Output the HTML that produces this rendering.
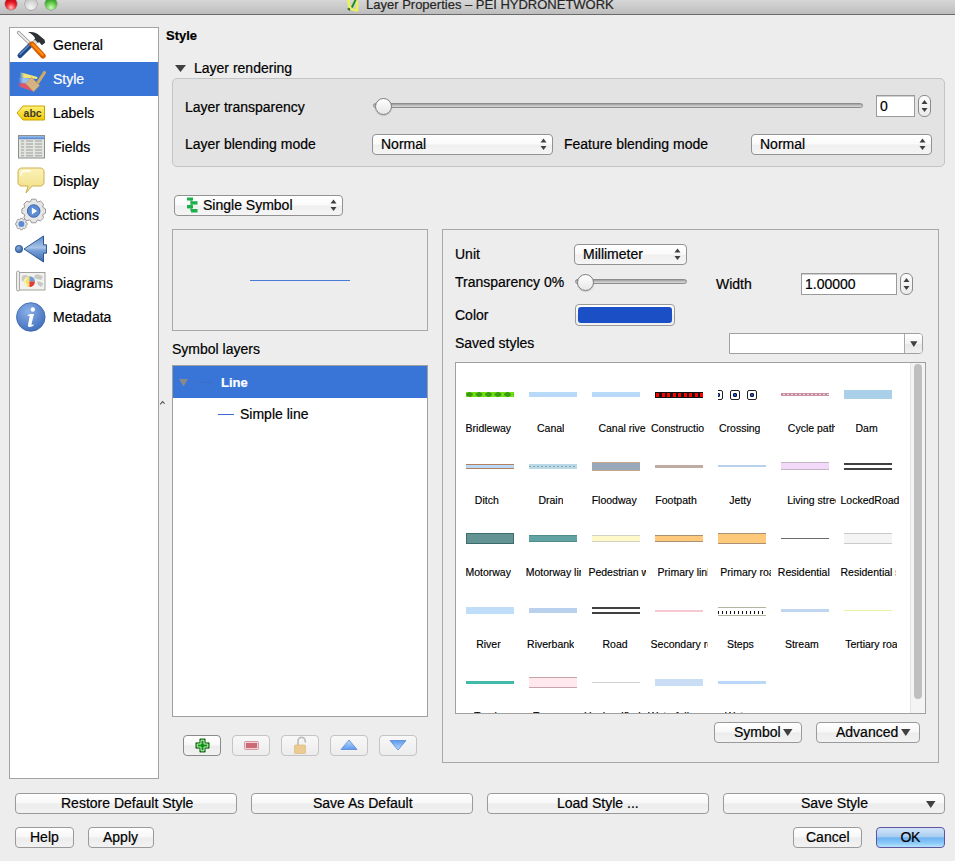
<!DOCTYPE html>
<html><head><meta charset="utf-8">
<style>
*{box-sizing:border-box;margin:0;padding:0}
html,body{width:955px;height:861px;overflow:hidden;background:#ededed;font-family:"Liberation Sans",sans-serif;font-size:14px;color:#000}
.a{position:absolute}
.t{position:absolute;white-space:nowrap;line-height:1;-webkit-text-stroke:0.2px currentColor}
#title{left:0;top:0;width:955px;height:15px;background:linear-gradient(#d6d6d6,#c8c8c8 60%,#bcbcbc);border-bottom:1px solid #6a6a6a}
.tl{position:absolute;top:-2.5px;width:12px;height:12px;border-radius:50%;box-shadow:0 0 0 .5px rgba(0,0,0,.35)}
.box{position:absolute;border:1px solid #9d9d9d;background:#fff}
.btn{position:absolute;border:1px solid #9a9a9a;border-radius:4px;background:linear-gradient(#ffffff 0%,#f7f7f7 48%,#ececec 52%,#f2f2f2 100%)}
.combo{position:absolute;border:1px solid #929292;border-radius:4px;background:linear-gradient(#ffffff 0%,#fafafa 48%,#efefef 52%,#f5f5f5 100%)}
.sb{position:absolute}
.lb{position:absolute;font-size:10.5px;white-space:nowrap;line-height:1;overflow:hidden;color:#000;-webkit-text-stroke:0.15px #000}
.sw{position:absolute}
</style></head><body>
<!-- title bar -->
<div id="title" class="a">
  <div class="tl" style="left:5px;background:radial-gradient(circle at 50% 80%,#ffc0c4 0%,#f02a30 40%,#c40010 75%,#8a0008 100%)"></div>
  <div class="tl" style="left:25px;background:radial-gradient(circle at 50% 80%,#f4f4f4 0%,#dcdcdc 45%,#c4c4c4 75%,#8e8e8e 100%)"></div>
  <div class="tl" style="left:45px;background:radial-gradient(circle at 50% 80%,#d0f8c0 0%,#6cd050 40%,#2e9a22 75%,#1a6410 100%)"></div>
  <svg class="a" style="left:347px;top:-2px" width="14" height="15" viewBox="0 0 14 15"><path d="M1.8 1.5C1.2 5 2 8.5 4.2 10.8" stroke="#eaf25a" stroke-width="2.6" fill="none" stroke-linecap="round"/><path d="M8.8 2C10.2 4.5 10.6 8 9.6 10.8" stroke="#eaf25a" stroke-width="2.4" fill="none" stroke-linecap="round"/><path d="M4.5 11C7 12.2 8.8 12.8 10.8 12.3" stroke="#eaf25a" stroke-width="2" fill="none" stroke-linecap="round"/><path d="M9 1L4.8 9.5" stroke="#138a1a" stroke-width="1.8"/><path d="M0 10.5L3.2 10.2L2.6 13Z" fill="#145a18"/></svg>
  <div class="t" style="left:366px;top:-2px;font-size:13px;color:#262626">Layer Properties – PEI HYDRONETWORK</div>
</div>

<!-- SIDEBAR -->
<div class="box" style="left:9px;top:27px;width:150px;height:752px;border-color:#a3a3a3"></div>
<div class="a" style="left:10px;top:62px;width:148px;height:34px;background:#3875d7"></div>
<!-- general icon -->
<svg class="a" style="left:14px;top:29px" width="34" height="32" viewBox="0 0 34 32">
  <path d="M4.5 3.5L16.5 15" stroke="#8c8c8c" stroke-width="3.2" stroke-linecap="round"/>
  <path d="M4.5 3.5L16.5 15" stroke="#ececec" stroke-width="1.8" stroke-linecap="round"/>
  <path d="M14 3.3C18.5 2.6 23 3.6 26 7L30.5 10.8L31.2 13.4L28 16.2L25.2 13.3L22.5 14.2L19.5 11.5L21.2 9.2C19.5 6.5 17.5 4.6 14 3.3Z" fill="#2e3236"/>
  <path d="M17 14.5L20.8 10.8L23.6 13.4L19.8 17.2Z" fill="#dfe3df" stroke="#9a9e9a" stroke-width=".5"/>
  <path d="M16.8 15.8L6 26.5" stroke="#1f4a8a" stroke-width="5" stroke-linecap="round"/>
  <path d="M15.6 15.8L6 25.2" stroke="#5c8ac8" stroke-width="1.4" stroke-linecap="round"/>
  <path d="M18 15L29 26.8" stroke="#d45e00" stroke-width="5.4" stroke-linecap="round"/>
  <path d="M18.6 15.2L28.6 25.8" stroke="#ff8c12" stroke-width="2.4" stroke-linecap="round"/>
</svg>
<!-- style icon -->
<svg class="a" style="left:15px;top:66px" width="34" height="28" viewBox="0 0 34 28">
  <defs><linearGradient id="fy" x1="0" x2="1"><stop offset="0" stop-color="#f0e870" stop-opacity="0"/><stop offset=".25" stop-color="#f0e478"/></linearGradient>
  <linearGradient id="fb" x1="0" x2="1"><stop offset="0" stop-color="#a8c8f0" stop-opacity="0"/><stop offset=".3" stop-color="#9cc0ec"/></linearGradient>
  <linearGradient id="fr" x1="0" x2="1"><stop offset="0" stop-color="#e85060" stop-opacity="0"/><stop offset=".25" stop-color="#e05868"/></linearGradient></defs>
  <path d="M4.5 6L22.5 11L22 13L4.5 11.5Z" fill="url(#fy)"/>
  <path d="M3.5 11.5L19 13L12 18L3.5 16.3Z" fill="url(#fb)"/>
  <path d="M2.5 16.3L12 18L18.5 25.6L2.5 20Z" fill="url(#fr)"/>
  <path d="M23 16.5L29.5 6.5" stroke="#d0a868" stroke-width="3.2" stroke-linecap="round"/>
  <path d="M10.8 17.6L16.5 11.5L24.6 19.4L18.6 25.8Z" fill="#d8b888" stroke="#b89058" stroke-width=".7"/>
  <path d="M13 15.3L21 23.3M15 13.3L23 21.3M12.5 19.5L19 13M15 22L21.5 15.5" stroke="#c4a070" stroke-width=".5"/>
</svg>
<!-- labels icon -->
<svg class="a" style="left:16px;top:105px" width="30" height="16" viewBox="0 0 30 16">
  <defs><linearGradient id="gy" x1="0" y1="0" x2="0" y2="1"><stop offset="0" stop-color="#fff27a"/><stop offset="1" stop-color="#f2c800"/></linearGradient></defs>
  <path d="M1 8L7 1H28.5V15H7Z" fill="url(#gy)" stroke="#c9a400" stroke-width="1"/>
  <text x="7.6" y="11.8" font-family="Liberation Sans" font-weight="bold" font-size="10.5" fill="#403c28">abc</text>
</svg>
<!-- fields icon -->
<svg class="a" style="left:18px;top:135px" width="27" height="24" viewBox="0 0 27 24">
  <defs><linearGradient id="gh" x1="0" y1="0" x2="0" y2="1"><stop offset="0" stop-color="#9cc0ee"/><stop offset="1" stop-color="#4f82cc"/></linearGradient></defs>
  <rect x=".5" y=".5" width="26" height="22.5" fill="#e2e4e0" stroke="#8e908c"/>
  <rect x="1" y="1" width="25" height="3.2" fill="url(#gh)"/>
  <g stroke="#9c9e9a" stroke-width="1">
   <path d="M3 6H6M8 6H15M17 6H24M3 9H6M8 9H15M17 9H24M3 12H6M8 12H15M17 12H24M3 15H6M8 15H15M17 15H24M3 18H6M8 18H15M17 18H24M3 20.8H6M8 20.8H15M17 20.8H24"/>
  </g>
</svg>
<!-- display icon -->
<svg class="a" style="left:17px;top:167px" width="28" height="27" viewBox="0 0 28 27">
  <defs><linearGradient id="gb" x1="0" y1="0" x2="0" y2="1"><stop offset="0" stop-color="#fbf2b8"/><stop offset="1" stop-color="#f0dc80"/></linearGradient></defs>
  <path d="M5 1H23C25.5 1 27 2.5 27 5V15C27 17.5 25.5 19 23 19H15L9 26L11 19H5C2.5 19 1 17.5 1 15V5C1 2.5 2.5 1 5 1Z" fill="url(#gb)" stroke="#cdb050" stroke-width="1"/>
  <path d="M4 8C4 5 5 4 8 4H13" stroke="#fff" stroke-width="1.5" fill="none" stroke-linecap="round"/>
</svg>
<!-- actions icon -->
<svg class="a" style="left:14px;top:197px" width="34" height="36" viewBox="0 0 34 36">
  <path d="M28.83 10.43 L31.51 11.89 L31.51 16.11 L28.83 17.57 L28.68 17.93 L29.54 20.86 L26.56 23.84 L23.63 22.98 L23.27 23.13 L21.81 25.81 L17.59 25.81 L16.13 23.13 L15.77 22.98 L12.84 23.84 L9.86 20.86 L10.72 17.93 L10.57 17.57 L7.89 16.11 L7.89 11.89 L10.57 10.43 L10.72 10.07 L9.86 7.14 L12.84 4.16 L15.77 5.02 L16.13 4.87 L17.59 2.19 L21.81 2.19 L23.27 4.87 L23.63 5.02 L26.56 4.16 L29.54 7.14 L28.68 10.07Z" fill="#e6e6e6" stroke="#8e8e8e" stroke-width=".9"/>
  <path d="M11.68 25.32 L13.11 25.98 L13.11 28.02 L11.68 28.68 L11.61 28.84 L12.16 30.32 L10.72 31.76 L9.24 31.21 L9.08 31.28 L8.42 32.71 L6.38 32.71 L5.72 31.28 L5.56 31.21 L4.08 31.76 L2.64 30.32 L3.19 28.84 L3.12 28.68 L1.69 28.02 L1.69 25.98 L3.12 25.32 L3.19 25.16 L2.64 23.68 L4.08 22.24 L5.56 22.79 L5.72 22.72 L6.38 21.29 L8.42 21.29 L9.08 22.72 L9.24 22.79 L10.72 22.24 L12.16 23.68 L11.61 25.16Z" fill="#e6e6e6" stroke="#8e8e8e" stroke-width=".8"/>
  <circle cx="19.7" cy="14" r="6.3" fill="#5b8bd2" stroke="#3a62a6" stroke-width=".9"/>
  <path d="M17.8 10.6L23.2 14L17.8 17.4Z" fill="#fff"/>
  <circle cx="7.4" cy="27" r="3" fill="#5b8bd2"/>
</svg>
<!-- joins icon -->
<svg class="a" style="left:14px;top:235px" width="34" height="28" viewBox="0 0 34 28">
  <defs><linearGradient id="ga" x1="0" y1="0" x2="0" y2="1"><stop offset="0" stop-color="#5a88c8"/><stop offset=".45" stop-color="#a8c4e8"/><stop offset=".55" stop-color="#7aa0d8"/><stop offset="1" stop-color="#3a68b0"/></linearGradient>
  <radialGradient id="gdot" cx=".4" cy=".35" r=".7"><stop offset="0" stop-color="#8ab0e0"/><stop offset="1" stop-color="#2a5a9a"/></radialGradient></defs>
  <circle cx="5" cy="14" r="3.7" fill="url(#gdot)" stroke="#24508a" stroke-width=".7"/>
  <path d="M10 14L29.5 1V9.8H32.5V18.2H29.5V27Z" fill="url(#ga)" stroke="#1e4a88" stroke-width=".9" stroke-linejoin="round"/>
</svg>
<!-- diagrams icon -->
<svg class="a" style="left:15px;top:270px" width="33" height="22" viewBox="0 0 33 22">
  <rect x="3.5" y="2.5" width="26.5" height="17.5" fill="#f2f2f0" stroke="#8c8c88" stroke-width=".8"/>
  <path d="M7 6C9 4.5 12 5 14 6.5L13 9L9 9.5L8 12L6.5 10Z M20 5C23 4 27 5 28 7L26 10L22 9L19 8Z M22 12C24 11 27 12 28.5 14L26 17L23 15Z" fill="#c8cac6"/>
  <rect x="1.5" y="1" width="3" height="20" rx="1.5" fill="#ececea" stroke="#8c8c88" stroke-width=".7"/>
  <circle cx="14.5" cy="11.6" r="5.4" fill="#f4e070"/>
  <path d="M14.5 11.6V6.2A5.4 5.4 0 0 1 19.9 11.6Z" fill="#6a98d8"/>
  <path d="M14.5 11.6H19.9A5.4 5.4 0 0 1 14.5 17Z" fill="#e03a3a"/>
  <path d="M12 7.5A5 5 0 0 0 12 15.5" stroke="#fff8c8" stroke-width="1.2" fill="none"/>
</svg>
<!-- metadata icon -->
<svg class="a" style="left:16px;top:302px" width="30" height="30" viewBox="0 0 30 30">
  <defs><radialGradient id="gm" cx=".4" cy=".3" r=".8"><stop offset="0" stop-color="#8ab0e8"/><stop offset="1" stop-color="#3a68b8"/></radialGradient></defs>
  <circle cx="14.8" cy="15" r="14.3" fill="url(#gm)" stroke="#3a64a8" stroke-width=".8"/>
  <circle cx="16.8" cy="7.5" r="2.2" fill="#fff"/>
  <path d="M14 12H18L15.5 22C15.3 23 16 23.2 17.5 22.3L17.8 23.3C15 25.5 11.5 25.8 12 23L13.6 14.5C13.7 13.7 13 13.5 11.8 14L11.6 13Z" fill="#fff"/>
</svg>
<div class="t" style="left:53px;top:38px">General</div>
<div class="t" style="left:53px;top:72px;color:#fff">Style</div>
<div class="t" style="left:53px;top:106px">Labels</div>
<div class="t" style="left:53px;top:140px">Fields</div>
<div class="t" style="left:53px;top:174px">Display</div>
<div class="t" style="left:53px;top:208px">Actions</div>
<div class="t" style="left:53px;top:242px">Joins</div>
<div class="t" style="left:53px;top:276px">Diagrams</div>
<div class="t" style="left:53px;top:310px">Metadata</div>
<svg class="a" style="left:159px;top:400px" width="8" height="6"><path d="M1.2 4.3L3.6 1.6L5.6 3.6" stroke="#555" stroke-width="1.1" fill="none"/></svg>

<!-- heading -->
<div class="t" style="left:166px;top:29px;font-weight:bold;font-size:13px">Style</div>
<svg class="a" style="left:174.5px;top:65px" width="11" height="7"><path d="M0 0H11L5.5 7Z" fill="#404040"/></svg>
<div class="t" style="left:194px;top:61px">Layer rendering</div>

<!-- GROUP -->
<div class="a" style="left:172px;top:78px;width:773px;height:89px;border:1px solid #c4c4c4;border-radius:5px;background:#e3e3e3"></div>
<div class="t" style="left:185px;top:100px">Layer transparency</div>
<div class="t" style="left:185px;top:137px">Layer blending mode</div>
<div class="t" style="left:564px;top:137px">Feature blending mode</div>
<!-- slider -->
<div class="a" style="left:373px;top:103px;width:490px;height:5px;border-radius:3px;background:linear-gradient(#9c9c9c,#c8c8c8 60%,#d8d8d8);border:1px solid #8c8c8c"></div>
<div class="a" style="left:375px;top:98px;width:17px;height:17px;border-radius:50%;background:linear-gradient(#ffffff,#e6e6e6);border:1px solid #7e7e7e;box-shadow:0 1px 1px rgba(0,0,0,.15)"></div>
<!-- spinbox -->
<div class="a" style="left:876px;top:95px;width:39px;height:22px;background:#fff;border:1px solid #9a9a9a;box-shadow:inset 0 1px 0 #d0d0d0"></div>
<div class="t" style="left:880px;top:99px">0</div>
<div class="a" style="left:918px;top:95px;width:13px;height:22px;border:1px solid #8a8a8a;border-radius:6px;background:linear-gradient(#fdfdfd,#eaeaea)"></div>
<svg class="a" style="left:921px;top:99px" width="7" height="14"><path d="M3.5 1L6.5 5H.5Z M.5 9H6.5L3.5 13Z" fill="#404040"/></svg>
<!-- combos -->
<div class="combo" style="left:372px;top:134px;width:181px;height:21px"></div>
<div class="t" style="left:381px;top:137px">Normal</div>
<svg class="a" style="left:540px;top:138px" width="7" height="13"><path d="M3.5 0.5L6.5 4.5H.5Z M.5 8H6.5L3.5 12Z" fill="#404040"/></svg>
<div class="combo" style="left:751px;top:134px;width:181px;height:21px"></div>
<div class="t" style="left:760px;top:137px">Normal</div>
<svg class="a" style="left:919px;top:138px" width="7" height="13"><path d="M3.5 0.5L6.5 4.5H.5Z M.5 8H6.5L3.5 12Z" fill="#404040"/></svg>

<!-- SYMBOL LEFT -->
<div class="combo" style="left:174px;top:195px;width:169px;height:21px"></div>
<svg class="a" style="left:187px;top:197px" width="11" height="16" viewBox="0 0 11 16">
  <path d="M4 1V14" stroke="#1a8a3a" stroke-width="1"/>
  <rect x="0" y="0.5" width="6" height="3" fill="#19b24a"/><rect x="4" y="4.2" width="6.5" height="3.4" fill="#19b24a"/>
  <rect x="0" y="8" width="6" height="3.4" fill="#19b24a"/><rect x="4" y="12" width="6.5" height="3.5" fill="#19b24a"/>
</svg>
<div class="t" style="left:203px;top:198px">Single Symbol</div>
<svg class="a" style="left:330px;top:199px" width="7" height="13"><path d="M3.5 0.5L6.5 4.5H.5Z M.5 8H6.5L3.5 12Z" fill="#404040"/></svg>
<!-- preview -->
<div class="a" style="left:172px;top:229px;width:256px;height:102px;border:1px solid #a8a8a8;background:#ededed"></div>
<div class="a" style="left:250px;top:280px;width:100px;height:1px;background:#4a7ad8"></div>
<div class="t" style="left:172px;top:342px">Symbol layers</div>
<!-- tree -->
<div class="box" style="left:172px;top:365px;width:256px;height:352px;border-color:#a0a0a0"></div>
<div class="a" style="left:173px;top:366px;width:254px;height:32px;background:#3875d7"></div>
<svg class="a" style="left:179px;top:379px" width="10" height="8"><path d="M0 0H9L4.5 7.5Z" fill="#8a8a8a"/></svg>
<div class="a" style="left:198px;top:382px;width:15px;height:1px;background:#3a6ec8"></div>
<div class="t" style="left:221px;top:376px;font-weight:bold;font-size:13px;color:#fff">Line</div>
<div class="a" style="left:218px;top:414px;width:16px;height:1px;background:#3a6ad0"></div>
<div class="t" style="left:240px;top:407px">Simple line</div>
<!-- tool buttons -->
<div class="btn" style="left:183px;top:735px;width:38px;height:21px;border-color:#8a8a8a"></div>
<svg class="a" style="left:194.5px;top:737.5px" width="15" height="15" viewBox="0 0 17 17"><path d="M5.5 1H11.5V5.5H16V11.5H11.5V16H5.5V11.5H1V5.5H5.5Z" fill="#0a7a0a" stroke="#005a00" stroke-width=".8"/><path d="M6.8 2.5H10.2V6.8H14.5V10.2H10.2V14.5H6.8V10.2H2.5V6.8H6.8Z" fill="#0c960c" stroke="#e8f8e8" stroke-width="1"/></svg>
<div class="btn" style="left:232px;top:735px;width:38px;height:21px;border-color:#c4c4c4;background:linear-gradient(#f8f8f8,#ececec)"></div>
<div class="a" style="left:243.5px;top:740.5px;width:15px;height:9.5px;background:#f0d0d4;border:1px solid #d49aa4;border-radius:1.5px"></div>
<div class="a" style="left:245.5px;top:742.5px;width:11px;height:5.5px;background:#cc6a78"></div>
<div class="btn" style="left:281px;top:735px;width:38px;height:21px;border-color:#c4c4c4;background:linear-gradient(#f8f8f8,#ececec)"></div>
<svg class="a" style="left:292px;top:736px" width="16" height="19" viewBox="0 0 16 19"><path d="M6 9V5A3.6 3.6 0 0 1 13.2 5V6.5" stroke="#bdbdbd" stroke-width="1.7" fill="none"/><rect x="2.5" y="9" width="11" height="8.5" rx="1" fill="#ebcb92" stroke="#dcbc84" stroke-width=".8"/></svg>
<div class="btn" style="left:330px;top:735px;width:38px;height:21px;border-color:#c4c4c4;background:linear-gradient(#f8f8f8,#ececec)"></div>
<svg class="a" style="left:340px;top:739px" width="18" height="12" viewBox="0 0 18 12"><defs><linearGradient id="gu" x1="0" y1="0" x2="0" y2="1"><stop offset="0" stop-color="#c0dcff"/><stop offset="1" stop-color="#5a9af0"/></linearGradient></defs><path d="M9 1L17 10.5H1Z" fill="url(#gu)" stroke="#5a88d0" stroke-width=".8"/></svg>
<div class="btn" style="left:379px;top:735px;width:38px;height:21px;border-color:#c4c4c4;background:linear-gradient(#f8f8f8,#ececec)"></div>
<svg class="a" style="left:389px;top:739px" width="18" height="12" viewBox="0 0 18 12"><defs><linearGradient id="gd" x1="0" y1="0" x2="0" y2="1"><stop offset="0" stop-color="#5a9af0"/><stop offset="1" stop-color="#c0dcff"/></linearGradient></defs><path d="M1 1.5H17L9 11Z" fill="url(#gd)" stroke="#5a88d0" stroke-width=".8"/></svg>

<!-- RIGHT PANEL -->
<div class="a" style="left:442px;top:229px;width:497px;height:534px;border:1px solid #a8a8a8"></div>
<div class="t" style="left:455px;top:247px">Unit</div>
<div class="combo" style="left:574px;top:244px;width:113px;height:21px"></div>
<div class="t" style="left:583px;top:247px">Millimeter</div>
<svg class="a" style="left:674px;top:248px" width="7" height="13"><path d="M3.5 0.5L6.5 4.5H.5Z M.5 8H6.5L3.5 12Z" fill="#404040"/></svg>
<div class="t" style="left:455px;top:275px">Transparency 0%</div>
<div class="a" style="left:575px;top:279px;width:112px;height:5px;border-radius:3px;background:linear-gradient(#9c9c9c,#c8c8c8 60%,#d8d8d8);border:1px solid #8c8c8c"></div>
<div class="a" style="left:577px;top:274px;width:17px;height:17px;border-radius:50%;background:linear-gradient(#ffffff,#e6e6e6);border:1px solid #7e7e7e;box-shadow:0 1px 1px rgba(0,0,0,.15)"></div>
<div class="t" style="left:716px;top:277px">Width</div>
<div class="a" style="left:801px;top:273px;width:96px;height:22px;background:#fff;border:1px solid #9a9a9a;box-shadow:inset 0 1px 0 #d0d0d0"></div>
<div class="t" style="left:805px;top:277px">1.00000</div>
<div class="a" style="left:900px;top:273px;width:13px;height:22px;border:1px solid #8a8a8a;border-radius:6px;background:linear-gradient(#fdfdfd,#eaeaea)"></div>
<svg class="a" style="left:903px;top:277px" width="7" height="14"><path d="M3.5 1L6.5 5H.5Z M.5 9H6.5L3.5 13Z" fill="#404040"/></svg>
<div class="t" style="left:455px;top:308px">Color</div>
<div class="btn" style="left:575px;top:304px;width:100px;height:22px;border-color:#9a9a9a"></div>
<div class="a" style="left:578px;top:307px;width:94px;height:16px;border-radius:3px;background:#1a4fc6"></div>
<div class="t" style="left:455px;top:336px">Saved styles</div>
<div class="a" style="left:729px;top:333px;width:194px;height:21px;background:#fff;border:1px solid #a0a0a0;border-radius:0 4px 4px 0"></div>
<div class="a" style="left:904px;top:334px;width:18px;height:19px;border-left:1px solid #a8a8a8;border-radius:0 3px 3px 0;background:linear-gradient(#ffffff,#f4f4f4 50%,#e8e8e8 52%,#f0f0f0)"></div>
<svg class="a" style="left:909.5px;top:340.5px" width="8" height="7"><path d="M0.2 0.2H7.4L3.8 6Z" fill="#404040"/></svg>
<!-- style list -->
<div class="a" style="left:455px;top:362px;width:471px;height:352px;background:#fff;border:1px solid #a0a0a0;overflow:hidden">
  <div class="a" style="left:454px;top:0;width:15px;height:350px;background:#f4f4f4;border-left:1px solid #e4e4e4"></div>
  <div class="a" style="left:458px;top:1px;width:8px;height:335px;border-radius:4px;background:#bfbfbf"></div>
</div>
<div class="a" style="left:456px;top:363px;width:453px;height:350px;overflow:hidden">
<!--GRID-->
<div class="sw" style="left:10px;top:29px;width:48px;height:5px;background:radial-gradient(ellipse 3.6px 2.4px at 3.5px 2.5px,#3e9a12 85%,transparent 100%) 0 0/9.5px 5px repeat-x,#6ee214"></div>
<div class="sw" style="left:73px;top:29px;width:48px;height:5px;background:#b9d9f9"></div>
<div class="sw" style="left:136px;top:29px;width:48px;height:5px;background:#b9d9f9"></div>
<div class="sw" style="left:199px;top:29px;width:48px;height:6px;background:repeating-linear-gradient(90deg,#111 0 1.3px,#f00 1.3px 4.3px,#111 4.3px 5.5px);border-top:1px solid #111;border-bottom:1px solid #111"></div>
<div class="sw" style="left:262px;top:27px;width:48px;height:10px;overflow:hidden"><div class="sw" style="left:-5px;top:0;width:10px;height:10px;border:1.5px solid #222;border-radius:2px;background:#fff"></div><div class="sw" style="left:-1.7999999999999998px;top:3.2px;width:3.6px;height:3.6px;border-radius:1px;background:#1a5ad0;border:.6px solid #113"></div><div class="sw" style="left:12px;top:0;width:10px;height:10px;border:1.5px solid #222;border-radius:2px;background:#fff"></div><div class="sw" style="left:15.2px;top:3.2px;width:3.6px;height:3.6px;border-radius:1px;background:#1a5ad0;border:.6px solid #113"></div><div class="sw" style="left:29px;top:0;width:10px;height:10px;border:1.5px solid #222;border-radius:2px;background:#fff"></div><div class="sw" style="left:32.2px;top:3.2px;width:3.6px;height:3.6px;border-radius:1px;background:#1a5ad0;border:.6px solid #113"></div></div>
<div class="sw" style="left:325px;top:30px;width:48px;height:3px;background:repeating-linear-gradient(90deg,#c8889c 0 2px,#f2dce4 2px 4px);border-top:1px solid #c890a4;border-bottom:1px solid #c890a4"></div>
<div class="sw" style="left:388px;top:27px;width:48px;height:9px;background:#a9d0e8"></div>
<div class="sw" style="left:10px;top:101px;width:48px;height:5px;background:#b9d9f9;border-top:1px solid #b48060;border-bottom:1px solid #b48060"></div>
<div class="sw" style="left:73px;top:101px;width:48px;height:5px;background:repeating-linear-gradient(90deg,#8aa8a8 0 2px,#b9d9e9 2px 4px) 0 2px/100% 1px no-repeat,#b9d9e9"></div>
<div class="sw" style="left:136px;top:99px;width:48px;height:9px;background:#9aa8bc;border-top:1px solid #c8a88a;border-bottom:1px solid #c8a88a"></div>
<div class="sw" style="left:199px;top:102px;width:48px;height:3px;background:#c0aca2"></div>
<div class="sw" style="left:262px;top:102px;width:48px;height:2px;background:#b8d2ee"></div>
<div class="sw" style="left:325px;top:99px;width:48px;height:8px;background:#f2d9fa;border-top:1px solid #c4b4c4;border-bottom:1px solid #c4b4c4"></div>
<div class="sw" style="left:388px;top:100px;width:48px;height:2px;background:#404040"></div>
<div class="sw" style="left:388px;top:105px;width:48px;height:2px;background:#404040"></div>
<div class="sw" style="left:10px;top:170px;width:48px;height:11px;background:#639393;border:1px solid #3c6c6c"></div>
<div class="sw" style="left:73px;top:172px;width:48px;height:7px;background:#62a2a2;border-top:1px solid #4f8c8c;border-bottom:1px solid #4f8c8c"></div>
<div class="sw" style="left:136px;top:172px;width:48px;height:7px;background:#fff8c8;border-top:1px solid #d4d2c4;border-bottom:1px solid #d4d2c4"></div>
<div class="sw" style="left:199px;top:172px;width:48px;height:7px;background:#ffc97c;border-top:1px solid #a89272;border-bottom:1px solid #a89272"></div>
<div class="sw" style="left:262px;top:170px;width:48px;height:11px;background:#ffc97c;border-top:1px solid #a89272;border-bottom:1px solid #a89272"></div>
<div class="sw" style="left:325px;top:175px;width:48px;height:1px;background:#6a6a6a"></div>
<div class="sw" style="left:388px;top:170px;width:48px;height:11px;background:#f4f4f4;border-top:1px solid #cacaca;border-bottom:1px solid #cacaca"></div>
<div class="sw" style="left:10px;top:244px;width:48px;height:7px;background:#c0ddf9"></div>
<div class="sw" style="left:73px;top:245px;width:48px;height:5px;background:#b9d1ed"></div>
<div class="sw" style="left:136px;top:244px;width:48px;height:2px;background:#404040"></div>
<div class="sw" style="left:136px;top:249px;width:48px;height:2px;background:#404040"></div>
<div class="sw" style="left:199px;top:247px;width:48px;height:2px;background:#f8c8d2"></div>
<div class="sw" style="left:262px;top:244px;width:48px;height:9px;background:repeating-linear-gradient(90deg,#111 0 1px,transparent 1px 4px) 0 2.5px/100% 3px no-repeat,#fff;border-top:1px solid #b2b2a0;border-bottom:1px solid #b2b2a0"></div>
<div class="sw" style="left:325px;top:246px;width:48px;height:3px;background:#bed6f2"></div>
<div class="sw" style="left:388px;top:247px;width:48px;height:1px;background:#e8f4a0"></div>
<div class="sw" style="left:10px;top:318px;width:48px;height:3px;background:#42baa9"></div>
<div class="sw" style="left:73px;top:314px;width:48px;height:11px;background:#ffe9ee;border-top:1px solid #c9a2aa;border-bottom:1px solid #c9a2aa"></div>
<div class="sw" style="left:136px;top:319px;width:48px;height:1px;background:#d0d0d0"></div>
<div class="sw" style="left:199px;top:316px;width:48px;height:7px;background:#c9ddf5"></div>
<div class="sw" style="left:262px;top:318px;width:48px;height:3px;background:#b9d9f9"></div>
<div class="lb" style="left:9.6px;top:60px">Bridleway</div>
<div class="lb" style="left:81.0px;top:60px">Canal</div>
<div class="lb" style="left:142.4px;top:60px;width:47.6px">Canal riverbank</div>
<div class="lb" style="left:195.0px;top:60px;width:56.5px">Constructio</div>
<div class="lb" style="left:263.0px;top:60px">Crossing</div>
<div class="lb" style="left:331.8px;top:60px;width:47.2px">Cycle path</div>
<div class="lb" style="left:399.5px;top:60px">Dam</div>
<div class="lb" style="left:18.8px;top:132px">Ditch</div>
<div class="lb" style="left:82.4px;top:132px">Drain</div>
<div class="lb" style="left:135.7px;top:132px">Floodway</div>
<div class="lb" style="left:199.3px;top:132px">Footpath</div>
<div class="lb" style="left:273.3px;top:132px">Jetty</div>
<div class="lb" style="left:331.2px;top:132px;width:48.8px">Living street</div>
<div class="lb" style="left:384.5px;top:132px">LockedRoad</div>
<div class="lb" style="left:9.4px;top:204px">Motorway</div>
<div class="lb" style="left:69.7px;top:204px;width:55.8px">Motorway link</div>
<div class="lb" style="left:132.4px;top:204px;width:57.6px">Pedestrian way</div>
<div class="lb" style="left:201.6px;top:204px;width:50.9px">Primary link</div>
<div class="lb" style="left:264.3px;top:204px;width:50.7px">Primary road</div>
<div class="lb" style="left:321.8px;top:204px;width:53.7px">Residential</div>
<div class="lb" style="left:384.5px;top:204px;width:55.5px">Residential street</div>
<div class="lb" style="left:20.2px;top:276px">River</div>
<div class="lb" style="left:71.1px;top:276px">Riverbank</div>
<div class="lb" style="left:146.5px;top:276px">Road</div>
<div class="lb" style="left:194.6px;top:276px;width:57.9px">Secondary road</div>
<div class="lb" style="left:270.9px;top:276px">Steps</div>
<div class="lb" style="left:328.9px;top:276px">Stream</div>
<div class="lb" style="left:389.2px;top:276px;width:51.8px">Tertiary road</div>
<div class="lb" style="left:18.0px;top:348px">Track</div>
<div class="lb" style="left:77.0px;top:348px">Tramway</div>
<div class="lb" style="left:128.0px;top:348px;width:62.0px">Unclassified</div>
<div class="lb" style="left:192.0px;top:348px;width:60.0px">Waterfall</div>
<div class="lb" style="left:269.0px;top:348px">Water</div>
<!--/GRID-->
</div>
<div class="btn" style="left:714px;top:722px;width:88px;height:21px"></div>
<div class="t" style="left:734px;top:725px">Symbol</div>
<svg class="a" style="left:783px;top:729px" width="10" height="8"><path d="M0 0H9.5L4.75 7Z" fill="#404040"/></svg>
<div class="btn" style="left:816px;top:722px;width:104px;height:21px"></div>
<div class="t" style="left:836px;top:725px">Advanced</div>
<svg class="a" style="left:901px;top:729px" width="10" height="8"><path d="M0 0H9.5L4.75 7Z" fill="#404040"/></svg>

<!-- BOTTOM -->
<div class="btn" style="left:15px;top:793px;width:222px;height:21px"></div>
<div class="t" style="left:61px;top:796px">Restore Default Style</div>
<div class="btn" style="left:251px;top:793px;width:222px;height:21px"></div>
<div class="t" style="left:313px;top:796px">Save As Default</div>
<div class="btn" style="left:487px;top:793px;width:222px;height:21px"></div>
<div class="t" style="left:557px;top:796px">Load Style ...</div>
<div class="btn" style="left:723px;top:793px;width:222px;height:21px"></div>
<div class="t" style="left:801px;top:796px">Save Style</div>
<svg class="a" style="left:926px;top:801px" width="10" height="8"><path d="M0 0H9.5L4.75 7Z" fill="#404040"/></svg>
<div class="btn" style="left:15px;top:827px;width:59px;height:21px"></div>
<div class="t" style="left:30px;top:830px">Help</div>
<div class="btn" style="left:88px;top:827px;width:66px;height:21px"></div>
<div class="t" style="left:103px;top:830px">Apply</div>
<div class="btn" style="left:793px;top:827px;width:69px;height:21px"></div>
<div class="t" style="left:806px;top:830px">Cancel</div>
<div class="a" style="left:876px;top:827px;width:69px;height:21px;border:1px solid #5e54a2;border-radius:4px;background:linear-gradient(#d2e4f8 0%,#aacdf2 46%,#6eb2f2 52%,#8ccaf8 80%,#b8e6fc 100%)"></div>
<div class="t" style="left:900.5px;top:830px;letter-spacing:-0.3px">OK</div>
</body></html>
